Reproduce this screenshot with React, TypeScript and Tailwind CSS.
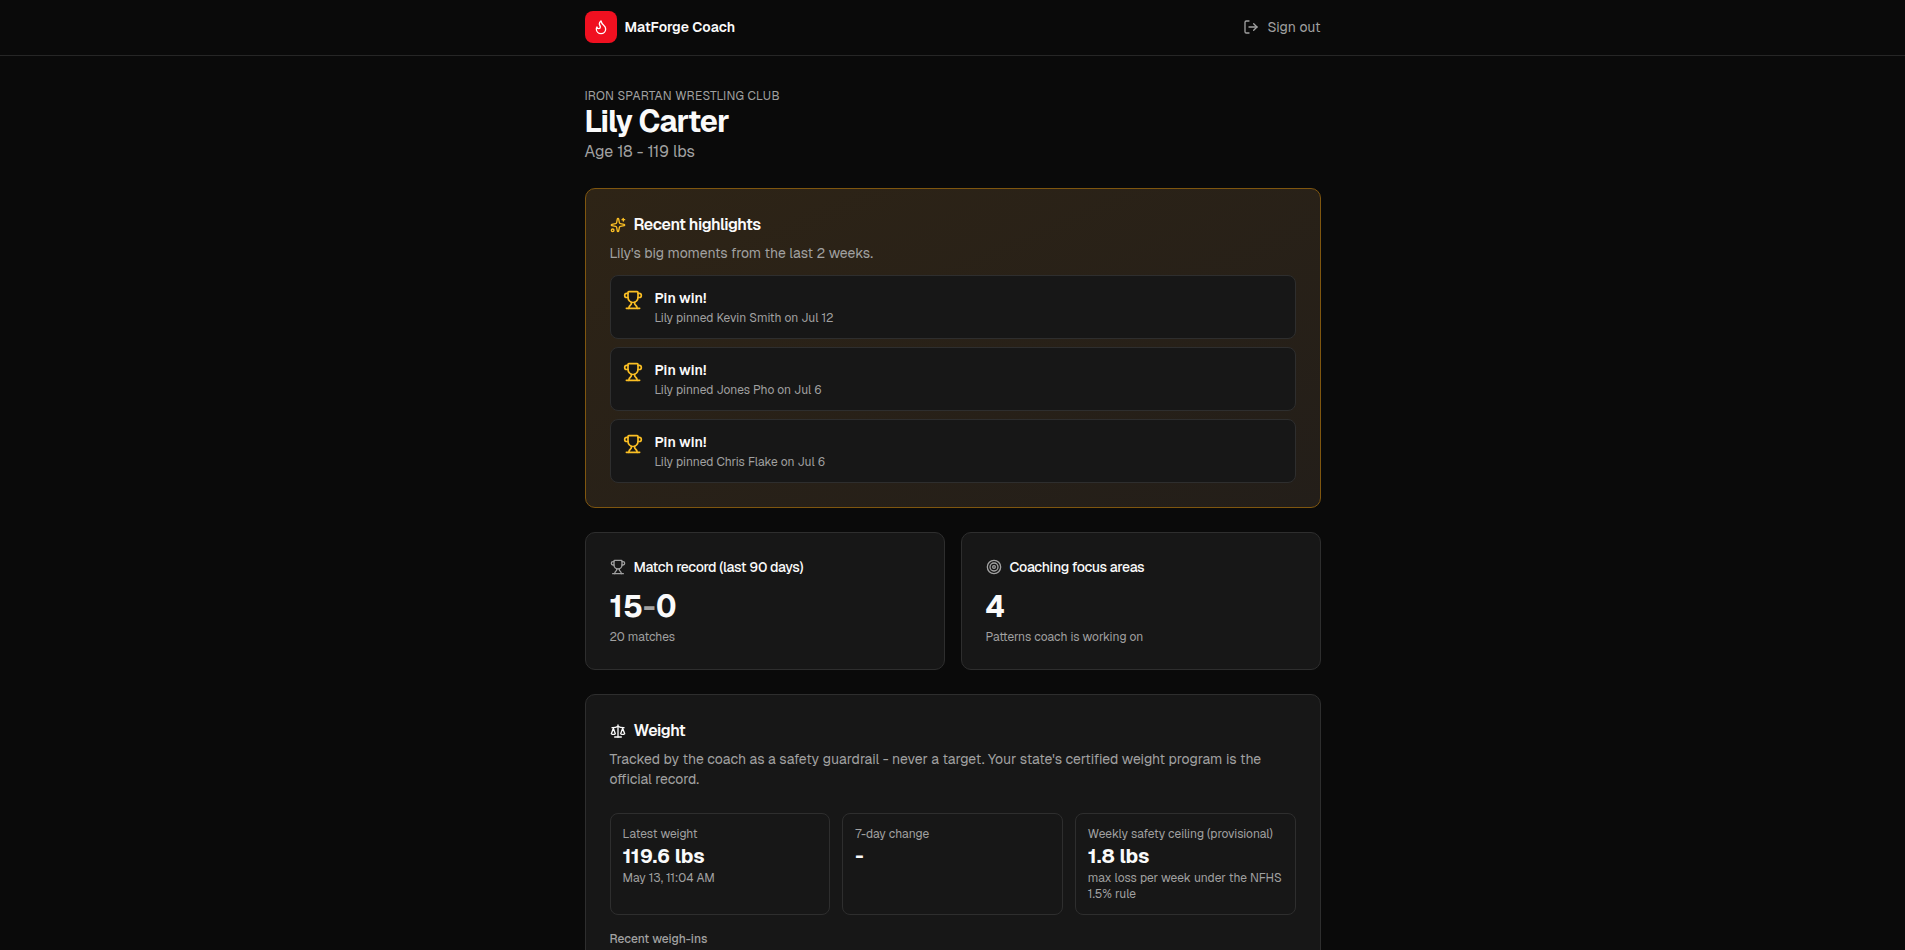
import React from 'react';
import { Flame, LogOut, Scale, Sparkles, Target, Trophy } from 'lucide-react';

const HIGHLIGHTS = [
    { title: 'Pin win!', detail: 'Lily pinned Kevin Smith on Jul 12' },
    { title: 'Pin win!', detail: 'Lily pinned Jones Pho on Jul 6' },
    { title: 'Pin win!', detail: 'Lily pinned Chris Flake on Jul 6' },
];

const WEIGHT_STATS = [
    { label: 'Latest weight', value: '119.6 lbs', note: 'May 13, 11:04 AM' },
    { label: '7-day change', value: '-', note: '' },
    {
        label: 'Weekly safety ceiling (provisional)',
        value: '1.8 lbs',
        note: 'max loss per week under the NFHS 1.5% rule',
    },
];

interface StatCardProps {
    icon: React.ReactNode;
    title: string;
    caption: string;
    children: React.ReactNode;
}

const StatCard: React.FC<StatCardProps> = ({ icon, title, caption, children }) => (
    <section className="rounded-[10px] border border-[#2e2e2e] bg-neutral-900 p-6">
        <h2 className="flex items-center gap-2 text-sm font-medium tracking-tight">
            {icon}
            {title}
        </h2>
        <p className="mt-3 text-3xl font-bold">{children}</p>
        <p className="mt-1 text-xs text-[#a1a1a1]">{caption}</p>
    </section>
);

export default function App() {
    return (
        <div className="min-h-screen bg-neutral-950 font-['Geist','Inter',sans-serif] text-neutral-50">
            <header className="border-b border-[#262626]">
                <div className="mx-auto flex max-w-3xl items-center justify-between px-4 pt-[11px] pb-3">
                    <a href="#" className="flex items-center gap-2">
                        <span className="flex size-8 items-center justify-center rounded-lg bg-[#f01020]">
                            <Flame className="size-4 text-white" />
                        </span>
                        <span className="text-sm font-semibold">MatForge Coach</span>
                    </a>
                    <button type="button" className="flex items-center gap-2 text-sm text-[#a1a1a1] hover:text-white">
                        <LogOut className="size-4" />
                        Sign out
                    </button>
                </div>
            </header>

            <main className="mx-auto max-w-3xl space-y-6 px-4 py-8">
                <div>
                    <p className="text-xs tracking-wide text-[#a1a1a1] uppercase">Iron Spartan Wrestling Club</p>
                    <h1 className="text-3xl font-bold tracking-tight">Lily Carter</h1>
                    <p className="text-base text-[#a1a1a1]">Age 18 - 119 lbs</p>
                </div>

                <section className="rounded-[10px] border border-[#7f560f] bg-linear-to-br from-[#2e2416] to-[#231e19] p-6">
                    <h2 className="flex items-center gap-2 text-base font-semibold tracking-tight">
                        <Sparkles className="size-4 text-[#fbbf24]" />
                        Recent highlights
                    </h2>
                    <p className="mt-1.5 text-sm text-[#a1a1a1]">Lily's big moments from the last 2 weeks.</p>
                    <ul className="mt-3 space-y-2">
                        {HIGHLIGHTS.map((item) => (
                            <li
                                key={item.detail}
                                className="flex items-start gap-3 rounded-lg border border-[#2e2e2e] bg-neutral-900 p-3"
                            >
                                <Trophy className="mt-0.5 size-5 shrink-0 text-[#fbbf24]" />
                                <div>
                                    <p className="text-sm font-semibold">{item.title}</p>
                                    <p className="mt-0.5 text-xs text-[#a1a1a1]">{item.detail}</p>
                                </div>
                            </li>
                        ))}
                    </ul>
                </section>

                <div className="grid gap-4 sm:grid-cols-2">
                    <StatCard
                        icon={<Trophy className="size-4 text-[#a1a1a1]" />}
                        title="Match record (last 90 days)"
                        caption="20 matches"
                    >
                        15<span className="text-[#a1a1a1]">-</span>0
                    </StatCard>
                    <StatCard
                        icon={<Target className="size-4 text-[#a1a1a1]" />}
                        title="Coaching focus areas"
                        caption="Patterns coach is working on"
                    >
                        4
                    </StatCard>
                </div>

                <section className="rounded-[10px] border border-[#2e2e2e] bg-neutral-900 p-6">
                    <h2 className="flex items-center gap-2 text-base font-semibold tracking-tight">
                        <Scale className="size-4" />
                        Weight
                    </h2>
                    <p className="mt-1.5 text-sm text-[#a1a1a1]">
                        Tracked by the coach as a safety guardrail - never a target. Your state's certified weight
                        program is the official record.
                    </p>
                    <div className="mt-6 grid gap-3 sm:grid-cols-3">
                        {WEIGHT_STATS.map((stat) => (
                            <div key={stat.label} className="rounded-lg border border-[#2e2e2e] p-3">
                                <p className="text-xs text-[#a1a1a1]">{stat.label}</p>
                                <p className="text-xl font-bold">{stat.value}</p>
                                {stat.note && <p className="text-xs text-[#a1a1a1]">{stat.note}</p>}
                            </div>
                        ))}
                    </div>
                    <h3 className="mt-4 text-xs font-medium text-[#a1a1a1]">Recent weigh-ins</h3>
                </section>
            </main>
        </div>
    );
}
